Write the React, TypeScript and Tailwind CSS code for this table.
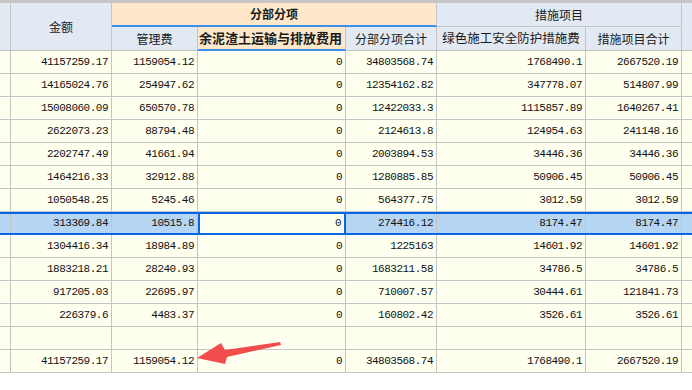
import React from 'react';

const rows: string[][] = [
  ['41157259.17', '1159054.12', '0', '34803568.74', '1768490.1', '2667520.19'],
  ['14165024.76', '254947.62', '0', '12354162.82', '347778.07', '514807.99'],
  ['15008060.09', '650570.78', '0', '12422033.3', '1115857.89', '1640267.41'],
  ['2622073.23', '88794.48', '0', '2124613.8', '124954.63', '241148.16'],
  ['2202747.49', '41661.94', '0', '2003894.53', '34446.36', '34446.36'],
  ['1464216.33', '32912.88', '0', '1280885.85', '50906.45', '50906.45'],
  ['1050548.25', '5245.46', '0', '564377.75', '3012.59', '3012.59'],
  ['313369.84', '10515.8', '0', '274416.12', '8174.47', '8174.47'],
  ['1304416.34', '18984.89', '0', '1225163', '14601.92', '14601.92'],
  ['1883218.21', '28240.93', '0', '1683211.58', '34786.5', '34786.5'],
  ['917205.03', '22695.97', '0', '710007.57', '30444.61', '121841.73'],
  ['226379.6', '4483.37', '0', '160802.42', '3526.61', '3526.61'],
  ['', '', '', '', '', ''],
  ['41157259.17', '1159054.12', '0', '34803568.74', '1768490.1', '2667520.19'],
];

const widths = ['w-[101px]', 'w-[86px]', 'w-[148px]', 'w-[91px]', 'w-[149px]', 'w-[96px]'];
const SELECTED = 7;

const cjk = { fontFamily: '"Noto Sans CJK SC", "Liberation Sans", sans-serif' };
const mono = { fontFamily: '"Liberation Mono", "DejaVu Sans Mono", monospace' };

function DataRow({ vals, sel }: { vals: string[]; sel: boolean }) {
  const bg = sel ? 'bg-[#b5d5f3]' : 'bg-[#fffff0]';
  const line = sel ? '' : 'border-b';
  return (
    <div className={`flex h-[23px] ${sel ? 'border-y-2 border-[#0b66e4]' : ''}`}>
      <div className={`w-[11px] shrink-0 border-r border-[#c4c4c4] ${line} ${bg}`} />
      {vals.map((v, i) => {
        const active = sel && i === 2;
        return (
          <div
            key={i}
            className={`${widths[i]} shrink-0 flex items-center justify-end pr-[3px] text-[11px] tracking-[-0.5px] text-[#111] ${
              active ? 'border-x-2 border-[#0b66e4] bg-[#fffff0]' : `border-r border-[#c4c4c4] ${line} ${bg}`
            }`}
            style={mono}
          >
            {v}
          </div>
        );
      })}
      <div className={`flex-1 border-[#c4c4c4] ${line} ${bg}`} />
    </div>
  );
}

export default function App() {
  return (
    <div className="relative w-[692px] h-[390px] bg-white overflow-hidden text-[#1a1a1a]" style={cjk}>
      {/* Header */}
      <div className="h-[3px] bg-[#c6c6c6]" />
      <div className="flex h-[48px] text-[12px]">
        <div className="w-[11px] shrink-0 bg-[#e3e9f2] border-r border-b border-[#c4c4c4]" />
        <div className="w-[101px] shrink-0 bg-[#e3e9f2] border-r border-b border-[#c4c4c4] flex items-center justify-center">
          金额
        </div>
        <div className="w-[325px] shrink-0 flex flex-col">
          <div className="h-[24px] bg-[#ffe8c9] border-b-2 border-b-[#3c8fea] border-r border-r-[#c4c4c4] flex items-center justify-center font-bold">
            分部分项
          </div>
          <div className="flex h-[24px]">
            <div className="w-[86px] shrink-0 bg-[#e3e9f2] border-r border-b border-[#c4c4c4] flex items-center justify-center">
              管理费
            </div>
            <div className="w-[148px] shrink-0 bg-[#ffe8c9] border-r border-r-[#c4c4c4] border-b-2 border-b-[#3c8fea] flex items-center pl-[1px] text-[13px] font-bold whitespace-nowrap overflow-hidden">
              余泥渣土运输与排放费用
            </div>
            <div className="w-[91px] shrink-0 bg-[#e3e9f2] border-r border-b border-[#c4c4c4] flex items-center justify-center">
              分部分项合计
            </div>
          </div>
        </div>
        <div className="w-[245px] shrink-0 flex flex-col">
          <div className="h-[24px] bg-[#e3e9f2] border-r border-b border-[#c4c4c4] flex items-center justify-center">
            措施项目
          </div>
          <div className="flex h-[24px]">
            <div className="w-[149px] shrink-0 bg-[#e3e9f2] border-r border-b border-[#c4c4c4] flex items-center justify-center text-[12.5px] whitespace-nowrap">
              绿色施工安全防护措施费
            </div>
            <div className="w-[96px] shrink-0 bg-[#e3e9f2] border-r border-b border-[#c4c4c4] flex items-center justify-center">
              措施项目合计
            </div>
          </div>
        </div>
        <div className="flex-1 bg-[#e3e9f2] border-b border-[#c4c4c4]" />
      </div>

      {/* Body */}
      {rows.map((r, i) => (
        <DataRow key={i} vals={r} sel={i === SELECTED} />
      ))}

      {/* Annotation arrow */}
      <svg className="absolute left-0 top-0 pointer-events-none" width="692" height="390">
        <polygon
          points="197,358 221,343 225,350 280,342 281,345 227,357 225,364"
          fill="#f24d4d"
        />
      </svg>
    </div>
  );
}
